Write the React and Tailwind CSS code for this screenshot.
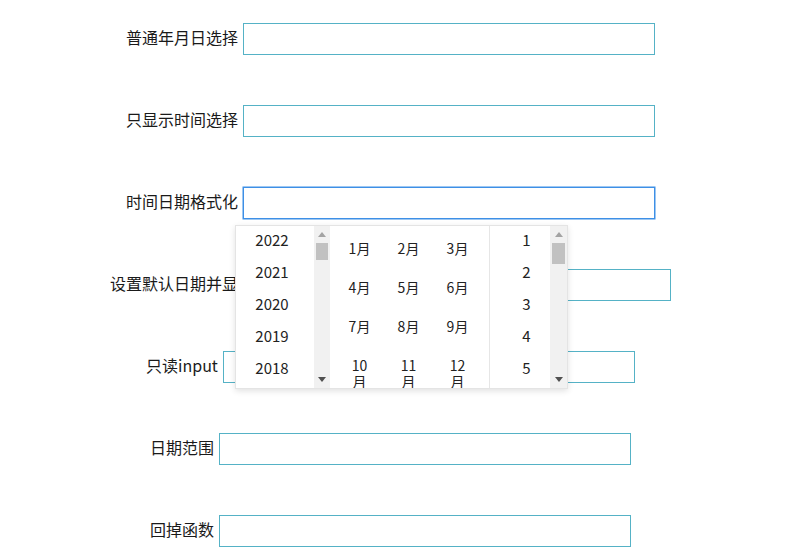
import React from "react";

const font = { fontFamily: '"Noto Sans CJK SC", "Noto Sans", sans-serif' };

function Scrollbar({ w, thumbH, upColor = "#a3a3a3", downColor = "#505050" }) {
  return (
    <div className={`flex flex-col bg-[#f1f1f1] ${w}`}>
      <div className="flex h-[17px] items-center justify-center">
        <svg width="8" height="5" viewBox="0 0 8 5">
          <polygon points="4,0 8,5 0,5" fill={upColor} />
        </svg>
      </div>
      <div className={`mx-[2px] bg-[#c1c1c1] ${thumbH}`} />
      <div className="flex-1" />
      <div className="flex h-[17px] items-center justify-center">
        <svg width="8" height="5" viewBox="0 0 8 5">
          <polygon points="0,0 8,0 4,5" fill={downColor} />
        </svg>
      </div>
    </div>
  );
}

function Popup() {
  const years = ["2022", "2021", "2020", "2019", "2018"];
  const months = ["1月", "2月", "3月", "4月", "5月", "6月", "7月", "8月", "9月", "10月", "11月", "12月"];
  const days = ["1", "2", "3", "4", "5"];
  return (
    <div className="absolute left-[-8px] top-[38px] z-10 flex h-[164px] w-[333px] overflow-hidden border border-[#e4e4e4] bg-white text-[15px] text-[#222] shadow-[0_2px_6px_rgba(0,0,0,0.12)]">
      <div className="flex w-[78px] flex-col pr-[6px]">
        {years.map((y) => (
          <div key={y} className="flex h-[32px] shrink-0 items-center justify-center pb-[4px]">
            {y}
          </div>
        ))}
      </div>
      <Scrollbar w="w-[16px]" thumbH="h-[17px]" />
      <div className="w-[160px] overflow-hidden border-r border-[#e6e6e6] pl-[5px] text-[14px]">
        <div className="grid grid-cols-[49px_49px_49px]">
          {months.map((m) => (
            <div key={m} className="flex h-[39px] justify-center overflow-visible">
              <div className="w-[26px] pt-[14px] text-center leading-[16px] break-all">{m}</div>
            </div>
          ))}
        </div>
      </div>
      <div className="flex w-[60px] flex-col pl-[13px]">
        {days.map((d) => (
          <div key={d} className="flex h-[32px] shrink-0 items-center justify-center pb-[4px]">
            {d}
          </div>
        ))}
      </div>
      <Scrollbar w="w-[17px]" thumbH="h-[21px]" />
    </div>
  );
}

function Row({ label, focused, children }) {
  return (
    <div className="flex items-center justify-center gap-[5px]">
      <span className="pb-[4px] text-[16px] leading-[20px] text-[#1a1a1a]">{label}</span>
      <div className="relative">
        <div
          className={
            focused
              ? "h-[32px] w-[412px] border border-[#3d8fe6] shadow-[0_0_0_0.5px_#3d8fe6] bg-white"
              : "h-[32px] w-[412px] border border-[#55b2c6] bg-white"
          }
        />
        {children}
      </div>
    </div>
  );
}

export default function App() {
  return (
    <div style={font} className="h-[558px] w-[800px] overflow-hidden bg-white">
      <div className="flex w-[781px] flex-col gap-[50px] pt-[23px]">
        <Row label="普通年月日选择" />
        <Row label="只显示时间选择" />
        <Row label="时间日期格式化" focused>
          <Popup />
        </Row>
        <Row label="设置默认日期并显示" />
        <Row label="只读input" />
        <Row label="日期范围" />
        <Row label="回掉函数" />
      </div>
    </div>
  );
}
